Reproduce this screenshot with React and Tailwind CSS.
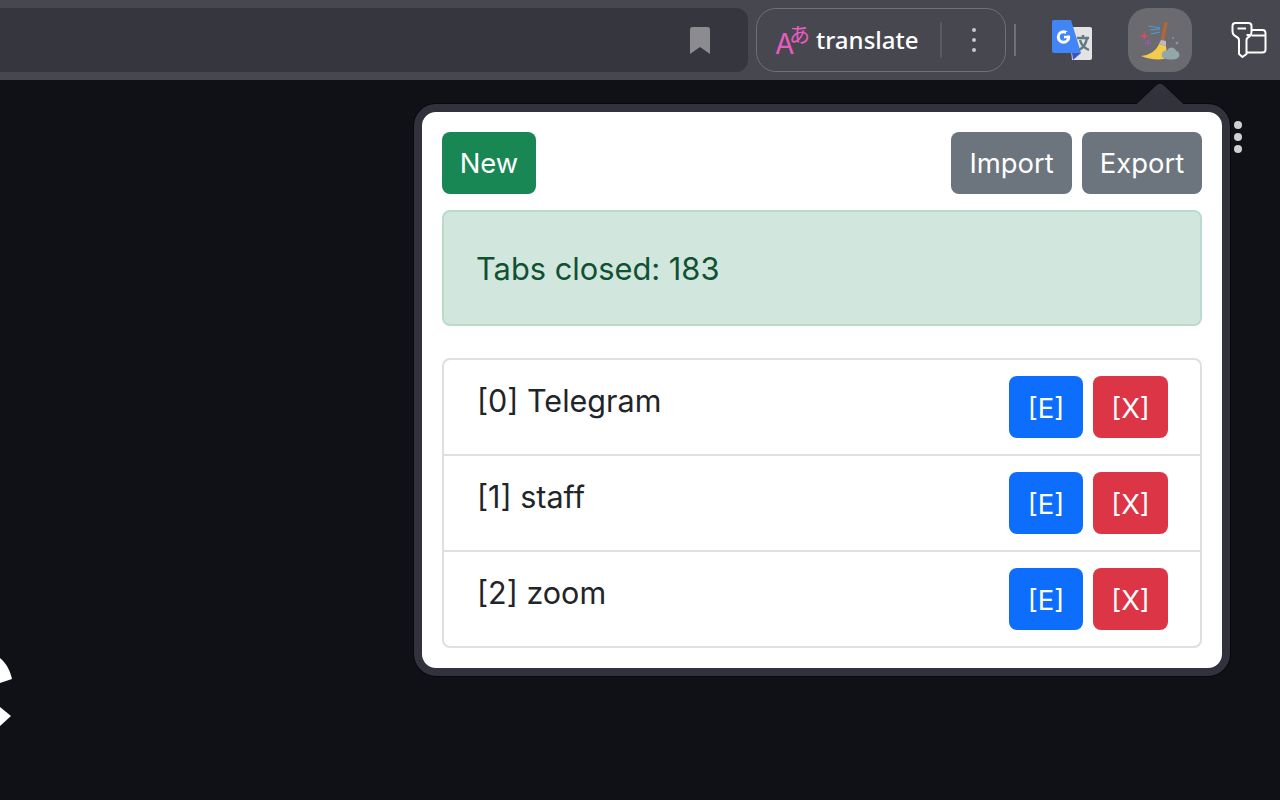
const rows = ['[0] Telegram', '[1] staff', '[2] zoom'];

const TranslateIcon = () => (
  <svg width="38" height="44" viewBox="0 0 38 44" className="shrink-0">
    <text x="0" y="36" fill="#e85cc0" fontSize="28" fontFamily="Inter, sans-serif">A</text>
    <text x="14" y="24" fill="#e85cc0" fontSize="21" fontFamily="'Noto Sans CJK JP', sans-serif">あ</text>
  </svg>
);

const GoogleTranslateIcon = () => (
  <svg width="40" height="40" viewBox="0 0 40 40">
    <path d="M17 7H38a2 2 0 0 1 2 2V38a2 2 0 0 1-2 2H20Z" fill="#e3e3e3" />
    <path d="M20 33h9l-8 7Z" fill="#3f51c4" />
    <path d="M2 0H19L29 33H2a2 2 0 0 1-2-2V2a2 2 0 0 1 2-2Z" fill="#4285f4" />
    <circle cx="11.500" cy="17" r="5.200" fill="none" stroke="#fff" strokeWidth="3" />
    <path d="M12 17h6" stroke="#fff" strokeWidth="2.600" />
    <rect x="14" y="12" width="6" height="3.500" fill="#4285f4" />
    <path d="M25 18h12M31 15v3M27 30c4-2 7-6 8-12M28 20c1 4 4 8 9 10" fill="none" stroke="#5f7a80" strokeWidth="2.400" />
  </svg>
);

const BroomIcon = () => (
  <svg width="42" height="42" viewBox="0 0 42 42">
    <path d="M27 3 L23 24" stroke="#b0683a" strokeWidth="3.500" />
    <path d="M2 37c9-1 15-5 18-12l7 2c1 5 0 9-2 13-8 1-16 0-23-3Z" fill="#f4cb4a" />
    <path d="M20 25l2-4 5 1 0 5Z" fill="#b9bdc0" />
    <path d="M23 38c-1-4 1-7 5-6 2-5 8-4 9 0 4 0 5 7 0 8-5 1-10 1-14-2Z" fill="#93a7a8" />
    <circle cx="34" cy="19" r="1.100" fill="#7d9799" />
    <circle cx="38" cy="24" r="1.500" fill="#7d9799" />
    <path d="M9 7l12 2M11 11l10 -1M12 15l9 -2" stroke="#4f9ad4" strokeWidth="1.200" />
    <path d="M2 17h6.500M5.300 13.800v6.500" stroke="#e8475a" strokeWidth="1.600" />
    <path d="M6 24h6M9 21v6" stroke="#9a58c0" strokeWidth="1.600" strokeDasharray="1.500 1" />
  </svg>
);

const ProfileIcon = () => (
  <svg width="36" height="38" viewBox="0 0 36 38" fill="none" stroke="#fff" strokeWidth="2" strokeLinejoin="round">
    <path d="M1.500 5Q1.500 2 4.500 2H17.500Q20.500 2 20.500 5V11Q20.500 14 18.500 15.500Q15.500 17 15.500 19V33L11.500 36 8 33V19Q8 17 5 15.500Q1.500 14 1.500 10Z" />
    <path d="M6.500 7.500H15" />
    <path d="M15.500 14H20.500M20.500 9H31.500Q34.500 9 34.500 12V28.500Q34.500 31.500 31.500 31.500H15.500" />
    <path d="M20.500 14.500H34.500" />
  </svg>
);

const Pie = () => (
  <svg className="absolute left-0 top-[650px]" width="16" height="80" viewBox="0 0 16 80">
    <path d="M0 8C6 13 10 20 12 29L0 33Z" fill="#fff" />
    <path d="M0 57L11 66 0 76Z" fill="#fff" />
  </svg>
);

const Btn = ({ className, children }) => (
  <button className={`h-[62px] rounded-lg text-white text-[27.4px] leading-none ${className}`}>{children}</button>
);

export default function App() {
  return (
    <div className="relative h-[800px] w-[1280px] overflow-hidden bg-[#0f1116] font-['Inter',sans-serif]">
      {/* browser toolbar */}
      <div className="flex h-20 items-center bg-[#47474f]">
        <div className="flex h-16 w-[748px] items-center justify-end rounded-r-xl bg-[#36363f] pr-[38px]">
          <svg width="20" height="27" viewBox="0 0 20 27">
            <path d="M2.500 0h15A2.500 2.500 0 0 1 20 2.500V27l-10-7-10 7V2.500A2.500 2.500 0 0 1 2.500 0Z" fill="#8b8b90" />
          </svg>
        </div>
        <div className="ml-2 flex h-16 w-[250px] items-center rounded-[20px] border border-[#6f6f77] pl-[18px]">
          <TranslateIcon />
          <span className="ml-[3px] w-[124px] font-['Noto_Sans',sans-serif] text-[24px] font-medium text-white">translate</span>
          <div className="h-9 w-0.5 bg-[#5a5a62]" />
          <div className="ml-[30px] flex flex-col gap-1.5">
            <div className="h-1 w-1 rounded-full bg-[#c8c8cb]" />
            <div className="h-1 w-1 rounded-full bg-[#c8c8cb]" />
            <div className="h-1 w-1 rounded-full bg-[#c8c8cb]" />
          </div>
        </div>
        <div className="ml-2 h-8 w-0.5 bg-[#6f6f77]" />
        <div className="ml-9"><GoogleTranslateIcon /></div>
        <div className="ml-9 flex h-16 w-16 items-center justify-center rounded-[20px] bg-[#6a6a70]">
          <BroomIcon />
        </div>
        <div className="ml-[39px]"><ProfileIcon /></div>
      </div>

      <Pie />

      {/* overflow dots */}
      <div className="absolute left-[1234px] top-[121px] flex flex-col gap-1">
        <div className="h-2 w-2 rounded-full bg-[#d0d0d0]" />
        <div className="h-2 w-2 rounded-full bg-[#d0d0d0]" />
        <div className="h-2 w-2 rounded-full bg-[#d0d0d0]" />
      </div>

      {/* extension popup */}
      <div className="absolute left-[414px] top-[104px] h-[572px] w-[816px] rounded-[22px] border-8 border-[#32323c] bg-white p-5 shadow-[0_0_0_1px_#08090c] text-[#212529]">
        <div className="flex gap-2.5">
          <Btn className="w-[94px] pt-0.5 bg-[#198754] mr-auto">New</Btn>
          <Btn className="w-[121px] pt-0.5 bg-[#6c757d]">Import</Btn>
          <Btn className="w-[120px] pt-0.5 bg-[#6c757d]">Export</Btn>
        </div>
        <div className="mt-4 flex h-[116px] items-center rounded-lg border-2 border-[#badbcc] bg-[#d1e7dd] pl-8 pt-0.5 text-[30.8px] text-[#0f5132]">
          Tabs closed: 183
        </div>
        <div className="mt-8 rounded-lg border-2 border-[#dfdfdf]">
          {rows.map((row, i) => (
            <div key={row} className={`flex items-start justify-between pl-[33px] pr-8 ${i > 0 ? 'h-24 border-t-2 border-[#dfdfdf]' : 'h-[94px]'}`}>
              <span className="mt-[18px] text-[30.5px] leading-[45px]">{row}</span>
              <div className="mt-4 flex gap-2.5">
                <Btn className="w-[74px] pt-1 bg-[#0d6efd]">[E]</Btn>
                <Btn className="w-[75px] pt-1 bg-[#dc3545]">[X]</Btn>
              </div>
            </div>
          ))}
        </div>
      </div>

      {/* popup arrow */}
      <svg className="absolute left-[1134px] top-[81px]" width="52" height="26" viewBox="0 0 52 26">
        <path d="M2 23 22 4Q26 0 30 4L50 23" fill="#32323c" stroke="#08090c" strokeWidth="1" />
        <rect x="3" y="22.500" width="46" height="3.500" fill="#32323c" />
      </svg>
    </div>
  );
}
